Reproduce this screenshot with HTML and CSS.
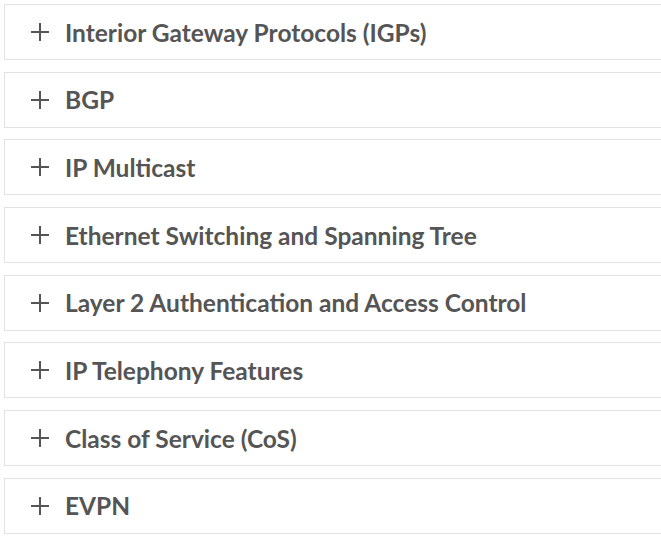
FILE: index.html
```html
<!DOCTYPE html>
<html>
<head>
  <title>Features</title>
  <link rel="stylesheet" href="styles.css">
</head>
<body>
  <div class="accordion">
    <div class="item"><span class="plus"></span><span class="label">Interior Gateway Protocols (IGPs)</span></div>
    <div class="item"><span class="plus"></span><span class="label">BGP</span></div>
    <div class="item"><span class="plus"></span><span class="label">IP Multicast</span></div>
    <div class="item"><span class="plus"></span><span class="label">Ethernet Switching and Spanning Tree</span></div>
    <div class="item"><span class="plus"></span><span class="label">Layer 2 Authentication and Access Control</span></div>
    <div class="item"><span class="plus"></span><span class="label">IP Telephony Features</span></div>
    <div class="item"><span class="plus"></span><span class="label">Class of Service (CoS)</span></div>
    <div class="item"><span class="plus"></span><span class="label">EVPN</span></div>
  </div>
</body>
</html>
```

FILE: styles.css
```css
* { box-sizing: border-box; }
body {
  margin: 0;
  padding: 4px 0 0 4px;
  background: #fff;
  font-family: Lato, sans-serif;
  overflow: hidden;
}
.accordion {
  display: flex;
  flex-direction: column;
  gap: 11.7px;
  width: 680px;
}
.item {
  display: flex;
  align-items: center;
  height: 56px;
  border: 1px solid #e2e2e2;
  padding-left: 26px;
  color: #555;
}
.plus {
  position: relative;
  width: 18px;
  height: 18px;
  margin-right: 16px;
}
.plus::before, .plus::after {
  content: "";
  position: absolute;
  background: #555;
}
.plus::before { left: 0; right: 0; top: 8px; height: 2px; }
.plus::after { top: 0; bottom: 0; left: 8px; width: 2px; }
.label {
  font-size: 24.5px;
  font-weight: 700;
}
```
